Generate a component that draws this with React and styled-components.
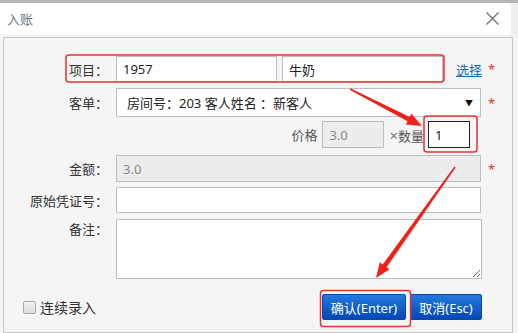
import React from 'react'
import styled, { createGlobalStyle } from 'styled-components'

const GlobalStyle = createGlobalStyle`
    html, body {
        margin: 0;
        padding: 0;
        background: #efefef;
    }
    body {
        font-family: "Noto Sans", "Noto Sans CJK SC", sans-serif;
        font-size: 13px;
        color: #333;
    }
`

const Page = styled.div`
    position: relative;
    width: 518px;
    height: 333px;
    overflow: hidden;
    border-top: 3px solid #b7b7b7;
    box-sizing: border-box;
`

const Header = styled.div`
    width: 511px;
    height: 31px;
    background: #fff;
    border-top-right-radius: 4px;
    display: flex;
    align-items: center;
    justify-content: space-between;
    padding: 0 12px 0 7px;
    box-sizing: border-box;
`

const Title = styled.span`
    font-size: 13px;
    color: #6f7780;
    font-family: "Noto Sans CJK SC", sans-serif;
`

const Close = styled.svg`
    width: 13px;
    height: 13px;
`

const Body = styled.div`
    background: #f5f5f5;
    padding: 3px 0 0 3px;
    height: 299px;
    box-sizing: border-box;
`

const Panel = styled.div`
    width: 510px;
    height: 296px;
    border: 1px solid #c6c6c6;
    box-sizing: border-box;
    padding-top: 18px;
    display: flex;
    flex-direction: column;
`

const Row = styled.div`
    display: flex;
    align-items: ${p => (p.$tall ? 'flex-start' : 'center')};
    margin-top: ${p => p.$top || 0}px;
`

const Label = styled.label`
    width: 104px;
    margin-right: 8px;
    text-align: right;
    white-space: nowrap;
    color: #333;
`

const Input = styled.div`
    width: ${p => p.$w || 365}px;
    height: ${p => p.$h || 26}px;
    box-sizing: border-box;
    border: 1px solid ${p => (p.$dark ? '#222' : '#bdbdbd')};
    background: ${p => (p.$disabled ? '#ededed' : '#fff')};
    color: ${p => (p.$disabled ? '#888' : '#222')};
    padding: 0 ${p => p.$pr || 6}px 0 ${p => p.$pl || 6}px;
    display: flex;
    align-items: center;
    justify-content: space-between;
`

const TextArea = styled.textarea`
    width: 366px;
    height: 60px;
    box-sizing: border-box;
    border: 1px solid #bdbdbd;
    background: #fff;
    margin: 0;
    font: inherit;
`

const Pair = styled.div`
    display: flex;
    gap: 5px;
`

const Link = styled.a`
    margin-left: 13px;
    color: #1769b4;
    text-decoration: underline;
    font-family: "Noto Sans CJK SC", sans-serif;
`

const Star = styled.span`
    margin-left: ${p => p.$ml || 7}px;
    color: #e8322f;
    font-size: 13px;
`

const Caret = styled.span`
    font-size: 8px;
    color: #111;
`

const PriceLine = styled.div`
    width: 365px;
    display: flex;
    align-items: center;
    justify-content: flex-end;
    padding-right: 11px;
    box-sizing: border-box;
`

const Small = styled.span`
    color: #555;
    margin: 0 ${p => p.$mr || 5}px 0 ${p => p.$ml || 5}px;
    white-space: nowrap;
`

const Times = styled.span`
    font-size: 15px;
    color: #777;
`

const Footer = styled.div`
    display: flex;
    align-items: center;
    justify-content: space-between;
    margin-top: 15px;
    padding: 0 30px 0 19px;
`

const Check = styled.label`
    display: flex;
    align-items: center;
    gap: 4px;
    color: #333;
    font-size: 14px;

    span {
        width: 11px;
        height: 11px;
        border: 1px solid #a8a8a8;
        border-radius: 2px;
        background: linear-gradient(#f4f4f4, #dcdcdc);
    }
`

const Buttons = styled.div`
    display: flex;
    gap: 4px;
`

const Button = styled.button`
    width: ${p => p.$w}px;
    height: 26px;
    border: 1px solid #0a4aa8;
    border-radius: 2px;
    background: linear-gradient(#2279de, #0347b6);
    color: #fff;
    font: inherit;
    padding: 0;
`

const Overlay = styled.svg`
    position: absolute;
    left: 0;
    top: -3px;
    width: 518px;
    height: 333px;
    pointer-events: none;
`

const arrow = (x1, y1, x2, y2) => {
    const dx = x2 - x1
    const dy = y2 - y1
    const len = Math.hypot(dx, dy)
    const ux = dx / len
    const uy = dy / len
    const nx = -uy
    const ny = ux
    const head = 15
    const bx = x2 - ux * head
    const by = y2 - uy * head
    const pts = [
        [x1 + nx * 0.8, y1 + ny * 0.8],
        [bx + nx * 2.4, by + ny * 2.4],
        [bx + nx * 6, by + ny * 6],
        [x2, y2],
        [bx - nx * 6, by - ny * 6],
        [bx - nx * 2.4, by - ny * 2.4],
        [x1 - nx * 0.8, y1 - ny * 0.8],
    ]
    return pts.map(p => p.join(',')).join(' ')
}

const App = () => {
    return (
        <>
            <GlobalStyle />
            <Page>
                <Header>
                    <Title>入账</Title>
                    <Close viewBox="0 0 13 13">
                        <path d="M0.5 0.5 L12.5 12.5 M12.5 0.5 L0.5 12.5" stroke="#6f6f6f" strokeWidth="1.3" fill="none" />
                    </Close>
                </Header>
                <Body>
                    <Panel>
                        <Row>
                            <Label>项目：</Label>
                            <Pair>
                                <Input $w={161}>1957</Input>
                                <Input $w={161}>牛奶</Input>
                            </Pair>
                            <Link href="#">选择</Link>
                            <Star $ml={6}>*</Star>
                        </Row>
                        <Row $top={6}>
                            <Label>客单：</Label>
                            <Input $h={29} $pl={10} $pr={7}>
                                <span>房间号：203 客人姓名 ：新客人</span>
                                <Caret>▼</Caret>
                            </Input>
                            <Star>*</Star>
                        </Row>
                        <Row $top={4}>
                            <Label />
                            <PriceLine>
                                <Small>价格</Small>
                                <Input $w={62} $h={27} $disabled>3.0</Input>
                                <Small $ml={5} $mr={4}><Times>×</Times>数量</Small>
                                <Input $w={42} $h={27} $dark>1</Input>
                            </PriceLine>
                        </Row>
                        <Row $top={7}>
                            <Label>金额：</Label>
                            <Input $h={27} $disabled>3.0</Input>
                            <Star>*</Star>
                        </Row>
                        <Row $top={5}>
                            <Label>原始凭证号：</Label>
                            <Input />
                        </Row>
                        <Row $top={6} $tall>
                            <Label>备注：</Label>
                            <TextArea />
                        </Row>
                        <Footer>
                            <Check><span />连续录入</Check>
                            <Buttons>
                                <Button $w={84}>确认(Enter)</Button>
                                <Button $w={72}>取消(Esc)</Button>
                            </Buttons>
                        </Footer>
                    </Panel>
                </Body>
                <Overlay viewBox="0 0 518 333">
                    <rect x="66" y="55" width="378" height="27" rx="3" fill="none" stroke="#e8322f" strokeWidth="1.5" />
                    <rect x="424" y="116" width="53" height="36" rx="3" fill="none" stroke="#e8322f" strokeWidth="1.5" />
                    <rect x="320.5" y="290.5" width="90" height="36" rx="3" fill="none" stroke="#e8322f" strokeWidth="1.5" />
                    <polygon points={arrow(350, 89, 422, 126)} fill="#f0201a" />
                    <polygon points={arrow(455, 167, 376, 278)} fill="#f0201a" />
                </Overlay>
            </Page>
        </>
    )
}

export default App
